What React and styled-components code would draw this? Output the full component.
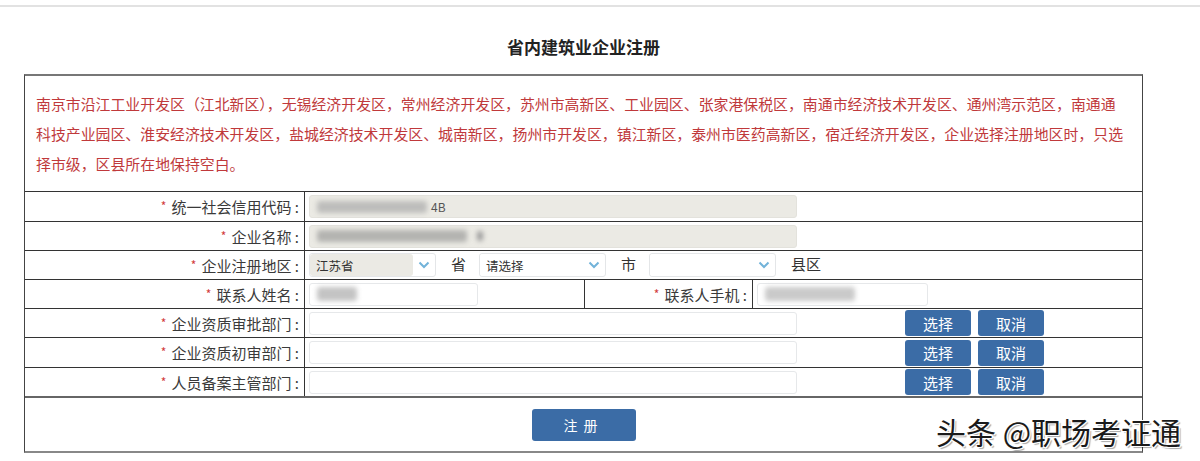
import React from 'react'
import styled, { createGlobalStyle } from 'styled-components'

const GlobalStyle = createGlobalStyle`
  body {
    margin: 0;
    background: #fff;
    font-family: "Noto Sans CJK SC", "Noto Sans", sans-serif;
    color: #333;
  }
`

const Page = styled.div`
  position: relative;
  width: 1200px;
  height: 461px;
  overflow: hidden;
`

const TopLine = styled.div`
  height: 5px;
  border-bottom: 2px solid #e2e2e2;
`

const Title = styled.h1`
  margin: 25px 0 12px 24px;
  width: 1119px;
  height: 30px;
  line-height: 30px;
  font-size: 17px;
  font-weight: bold;
  text-align: center;
  color: #222;
`

const Frame = styled.div`
  margin-left: 24px;
  width: 1117px;
  border-top: 2px solid #777;
  border-left: 1px solid #444;
  border-right: 1px solid #444;
  border-bottom: 2px solid #888;
`

const Notice = styled.div`
  height: 115px;
  box-sizing: border-box;
  padding: 13px 0 0 11px;
  font-size: 14.9px;
  line-height: 30px;
  color: #c0393b;
  white-space: nowrap;
`

const Row = styled.div`
  display: grid;
  grid-template-columns: ${(p) => p.cols || '280px 1fr'};
  height: ${(p) => p.h || 29}px;
  box-sizing: border-box;
  border-top: ${(p) => (p.thick ? '2px solid #666' : '1px solid #333')};
`

const LabelCell = styled.div`
  display: flex;
  align-items: center;
  justify-content: flex-end;
  padding-right: 5px;
  border-right: 1px solid #333;
  font-size: 15px;
  color: #3a3a3a;
  white-space: nowrap;
`

const Star = styled.span`
  color: #d23c3c;
  font-size: 12px;
  margin-right: 5px;
  position: relative;
  top: -1px;
`

const ValueCell = styled.div`
  display: flex;
  align-items: center;
  padding-left: 4px;
  border-right: ${(p) => (p.divide ? '1px solid #333' : 'none')};
  font-size: 15px;
  color: #333;
`

const Field = styled.div`
  display: flex;
  align-items: center;
  width: ${(p) => p.w}px;
  height: 23px;
  box-sizing: border-box;
  padding-left: 7px;
  background: ${(p) => (p.readOnly ? '#ebeae4' : '#fff')};
  border: 1px solid ${(p) => (p.readOnly ? '#e3e2dc' : '#e6e8ea')};
  border-radius: 3px;
  font-size: 12px;
  color: #555;
`

const Blur = styled.span`
  display: inline-block;
  width: ${(p) => p.w}px;
  height: ${(p) => p.h || 12}px;
  margin-right: ${(p) => p.gap || 0}px;
  background: ${(p) => p.c || '#b9b9b9'};
  filter: blur(2.5px);
  border-radius: 3px;
`

const Select = styled.div`
  display: flex;
  width: 127px;
  height: 24px;
  box-sizing: border-box;
  border: 1px solid #e4e6e8;
  border-radius: 3px;
  background: #fff;
  overflow: hidden;
`

const SelectText = styled.div`
  flex: 1;
  display: flex;
  align-items: center;
  padding-left: 6px;
  font-size: 12.5px;
  color: #333;
  background: ${(p) => (p.disabled ? '#ebeae4' : '#fff')};
  border-radius: 3px;
`

const Arrow = styled.div`
  width: 22px;
  display: flex;
  align-items: center;
  justify-content: center;
`

const Unit = styled.span`
  margin: 0 13px 0 15px;
  font-size: 15px;
  position: relative;
  top: -2px;
`

const Btn = styled.button`
  width: ${(p) => p.w || 66}px;
  height: ${(p) => p.h || 26}px;
  margin-left: ${(p) => p.ml || 0}px;
  border: none;
  border-radius: 3px;
  background: #3b6ca6;
  color: #fff;
  font-family: "Noto Sans CJK SC", sans-serif;
  font-size: ${(p) => p.fs || 15}px;
  letter-spacing: ${(p) => p.ls || 0}px;
  padding: 0;
  cursor: pointer;
`

const Footer = styled.div`
  height: 55px;
  border-top: 2px solid #666;
  box-sizing: border-box;
  display: flex;
  align-items: center;
  justify-content: center;
`

const Watermark = styled.div`
  position: absolute;
  left: 936px;
  top: 411px;
  font-size: 30px;
  line-height: 40px;
  color: #1a1a1a;
  white-space: nowrap;
  text-shadow: 1px 1px 0 #fff, -1px -1px 0 #fff, 1px -1px 0 #fff, -1px 1px 0 #fff,
    2px 2px 1px rgba(0, 0, 0, 0.35);
`

const Chevron = () => (
  <svg width="12" height="8" viewBox="0 0 12 8">
    <path d="M1.5 1.5 L6 6 L10.5 1.5" fill="none" stroke="#72b3d9" strokeWidth="2" />
  </svg>
)

const Label = ({ children }) => (
  <LabelCell>
    <Star>*</Star>
    {children} :
  </LabelCell>
)

const DeptRow = ({ label, h }) => (
  <Row h={h}>
    <Label>{label}</Label>
    <ValueCell>
      <Field w={488} />
      <Btn ml={108}>选择</Btn>
      <Btn ml={7}>取消</Btn>
    </ValueCell>
  </Row>
)

export default function App() {
  return (
    <Page>
      <GlobalStyle />
      <TopLine />
      <Title>省内建筑业企业注册</Title>
      <Frame>
        <Notice>
          南京市沿江工业开发区（江北新区），无锡经济开发区，常州经济开发区，苏州市高新区、工业园区、张家港保税区，南通市经济技术开发区、通州湾示范区，南通通
          <br />
          科技产业园区、淮安经济技术开发区，盐城经济技术开发区、城南新区，扬州市开发区，镇江新区，泰州市医药高新区，宿迁经济开发区，企业选择注册地区时，只选
          <br />
          择市级，区县所在地保持空白。
        </Notice>
        <Row h={30}>
          <Label>统一社会信用代码</Label>
          <ValueCell>
            <Field w={488} readOnly>
              <Blur w={110} gap={4} c="#bdbdbb" />
              <span>4B</span>
            </Field>
          </ValueCell>
        </Row>
        <Row>
          <Label>企业名称</Label>
          <ValueCell>
            <Field w={488} readOnly>
              <Blur w={150} gap={10} c="#b3b3b0" />
              <Blur w={6} h={10} c="#999" />
            </Field>
          </ValueCell>
        </Row>
        <Row>
          <Label>企业注册地区</Label>
          <ValueCell>
            <Select>
              <SelectText disabled>江苏省</SelectText>
              <Arrow>
                <Chevron />
              </Arrow>
            </Select>
            <Unit>省</Unit>
            <Select>
              <SelectText>请选择</SelectText>
              <Arrow>
                <Chevron />
              </Arrow>
            </Select>
            <Unit>市</Unit>
            <Select>
              <SelectText />
              <Arrow>
                <Chevron />
              </Arrow>
            </Select>
            <Unit>县区</Unit>
          </ValueCell>
        </Row>
        <Row cols="280px 280px 168px 1fr">
          <Label>联系人姓名</Label>
          <ValueCell divide>
            <Field w={169}>
              <Blur w={40} h={14} c="#c4c4c4" />
            </Field>
          </ValueCell>
          <Label>联系人手机</Label>
          <ValueCell>
            <Field w={171}>
              <Blur w={90} h={14} c="#cacaca" />
            </Field>
          </ValueCell>
        </Row>
        <DeptRow label="企业资质审批部门" h={29} />
        <DeptRow label="企业资质初审部门" h={30} />
        <DeptRow label="人员备案主管部门" h={29} />
        <Footer>
          <Btn w={104} h={32} fs={14} ls={6}>
            注册
          </Btn>
        </Footer>
      </Frame>
      <Watermark>头条 @职场考证通</Watermark>
    </Page>
  )
}
